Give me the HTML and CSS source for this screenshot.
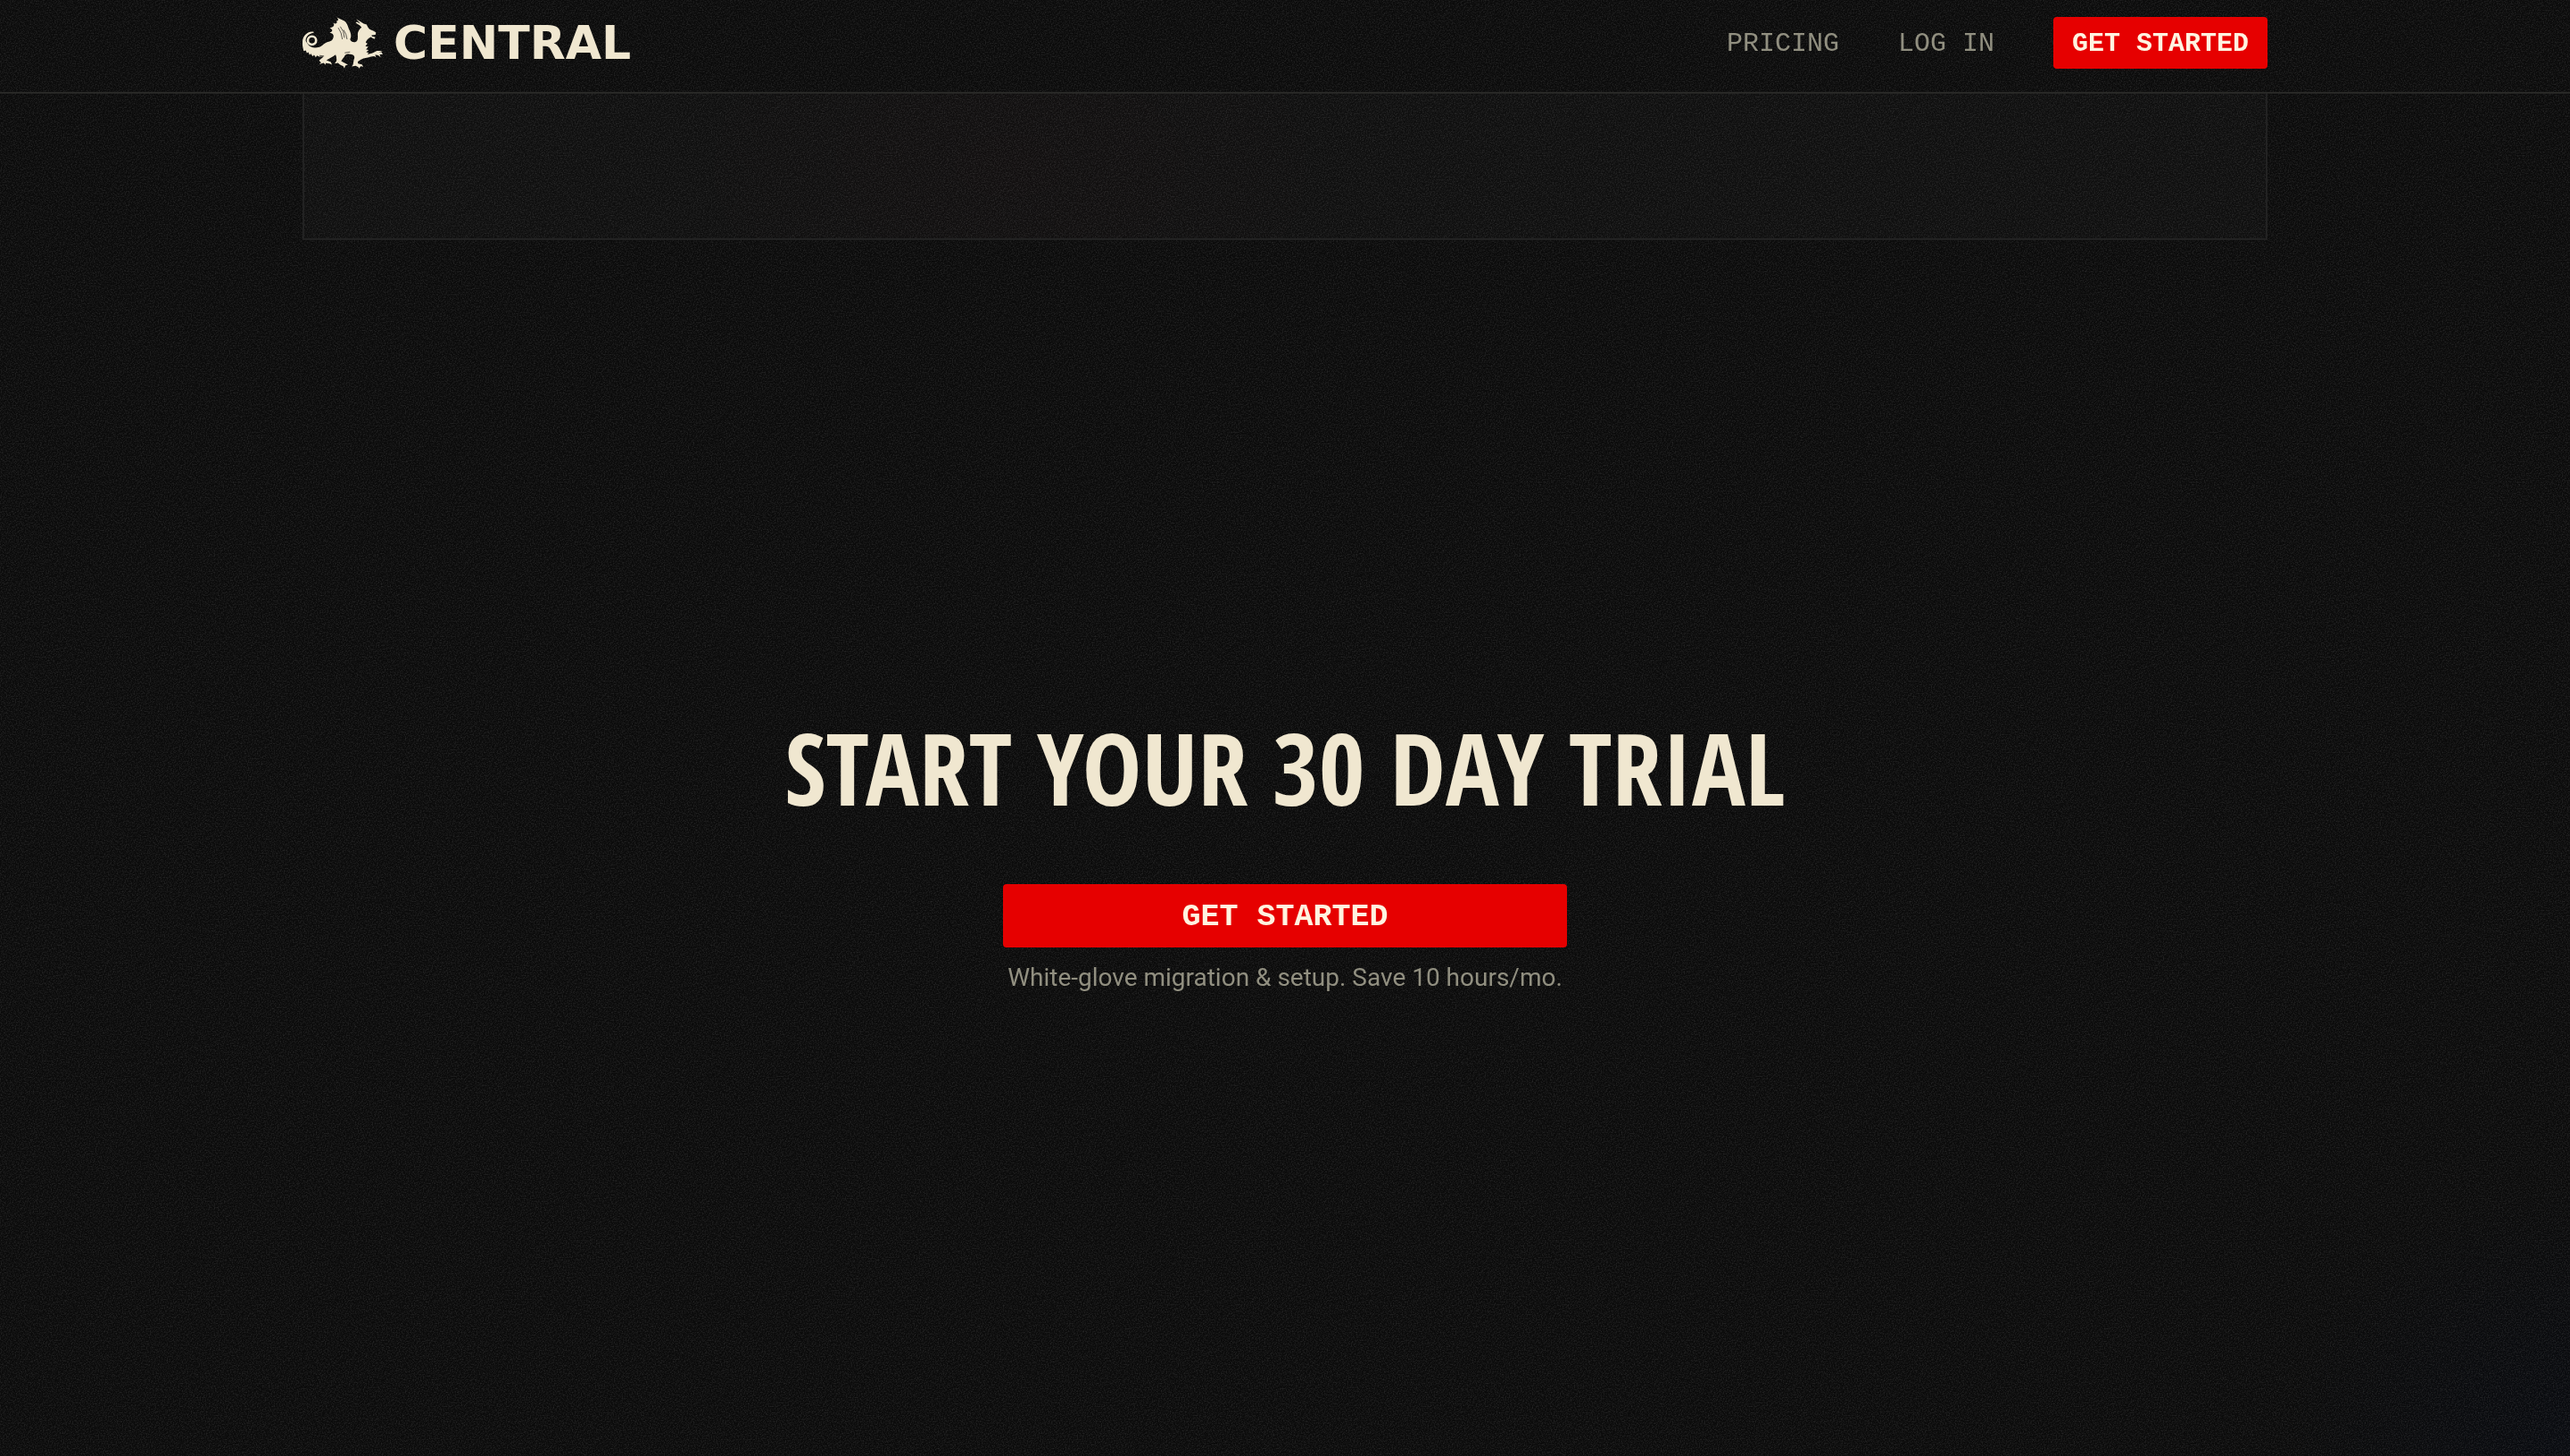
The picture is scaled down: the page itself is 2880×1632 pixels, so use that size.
FILE: index.html
```html
<!DOCTYPE html>
<html lang="en">
<head>
<meta charset="utf-8">
<meta name="viewport" content="width=device-width, initial-scale=1">
<title>Central</title>
<link rel="stylesheet" href="styles.css">
</head>
<body>
<svg class="grain" aria-hidden="true">
  <filter id="grain" x="0" y="0" width="100%" height="100%" color-interpolation-filters="sRGB">
    <feTurbulence type="fractalNoise" baseFrequency="0.7" numOctaves="2" stitchTiles="stitch"/>
    <feColorMatrix values="0 0 0 0 1  0 0 0 0 1  0 0 0 0 1  0.24 0 0 0 -0.095"/>
  </filter>
  <rect width="100%" height="100%" filter="url(#grain)"/>
</svg>
<header class="site-header">
  <div class="container header-row">
    <a class="brand" href="#">
      <svg class="brand-mark" viewBox="27 31 272 174" aria-hidden="true">
        <path fill="currentColor" d="M65 81C48 77 29 91 27 112C25 128 30 138 31 146L38 144L42 153L47 150L51 159L56 155L61 164L66 159L72 167L76 161L83 165L98 164C95 169 88 173 83 178L90 185L83 191L98 186L106 193L105 187L118 188L127 192L123 183L108 177C118 171 130 165 139 158C142 164 143 172 142 179L136 188L147 186L154 192L165 197L169 205L172 195L181 192L169 186L158 180C161 173 168 167 171 160C178 154 186 156 193 157C203 160 205 166 201 175L198 192L194 198L207 196L216 200L219 205L224 197L233 199L228 191L215 188L214 182C222 175 231 170 240 169C252 168 261 163 270 163L276 167L273 158L283 160L292 167L288 157L299 157L294 149L285 150L299 145L279 145L264 153L247 157L251 151L243 150L251 142L242 141L250 131L240 130L247 120L241 117C243 110 249 102 258 98L270 105L274 99L262 96L261 92L274 91L276 83L268 78L254 72L249 66L244 56L234 53L209 37L223 53L211 47L207 50L222 60L227 66C219 72 213 82 214 92C215 104 214 111 207 115C199 118 191 114 188 106C194 98 191 84 184 71C179 55 174 45 164 42L143 32C151 40 148 46 141 43C148 51 140 56 131 51C137 59 133 65 119 67C131 73 130 80 119 84C131 85 134 93 131 101C128 111 121 112 113 115C100 118 95 129 84 132C68 137 54 134 46 124L38 112C37 97 50 86 65 84Z"/>
        <circle class="brand-tail" cx="59" cy="110" r="14"/>
        <path class="brand-cut" d="M148 67Q160 83 162 106M155 63Q168 78 169 101M166 74Q176 88 178 106M100 163L84 161M170 152L188 149"/>
      </svg>
      <span class="brand-name">CENTRAL</span>
    </a>
    <nav class="nav">
      <a class="nav-link" href="#">PRICING</a>
      <a class="nav-link" href="#">LOG IN</a>
      <button class="btn btn-small" type="button">GET STARTED</button>
    </nav>
  </div>
</header>
<main>
  <div class="container">
    <div class="panel"></div>
  </div>
  <section class="cta">
    <h1 class="cta-title">START YOUR 30 DAY TRIAL</h1>
    <div class="cta-action">
      <button class="btn btn-large" type="button">GET STARTED</button>
      <p class="cta-note">White-glove migration &amp; setup. Save 10 hours/mo.</p>
    </div>
  </section>
</main>
</body>
</html>
```
FILE: styles.css
```css
:root {
  --cream: #f0e7d0;
  --muted: #918f80;
  --red: #e60000;
  --line: #282826;
}

* { box-sizing: border-box; }

body {
  margin: 0;
  min-height: 100vh;
  color: var(--cream);
  background: radial-gradient(ellipse 320px 300px at 100% 100%, #090b10, #0b0b0b) #0b0b0b;
  font-family: Roboto, "Liberation Sans", sans-serif;
}

.grain {
  position: fixed;
  inset: 0;
  z-index: -1;
  width: 100%;
  height: 100%;
}

.container {
  width: 100%;
  max-width: 2282px;
  margin: 0 auto;
  padding: 0 40px;
}

.site-header { border-bottom: 2px solid var(--line); }

.header-row {
  display: flex;
  align-items: center;
  justify-content: space-between;
  padding-top: 19px;
  padding-bottom: 26px;
}

.brand {
  display: flex;
  align-items: center;
  gap: 12px;
  color: var(--cream);
  text-decoration: none;
}

.brand-mark { width: 90px; height: 58px; }

.brand-cut {
  fill: none;
  stroke: #111;
  stroke-width: 2;
}

.brand-tail {
  fill: none;
  stroke: currentColor;
  stroke-width: 8;
}

.brand-name {
  font: 700 52px/58px "DejaVu Sans", sans-serif;
}

.nav {
  display: flex;
  align-items: center;
  gap: 66px;
}

.nav-link {
  padding-top: 2px;
  color: var(--muted);
  font: 30px/56px "Liberation Mono", monospace;
  text-decoration: none;
}

.btn {
  border: 0;
  border-radius: 4px;
  color: #fff3e0;
  background: var(--red);
  font-family: "Liberation Mono", monospace;
  font-weight: 700;
  cursor: pointer;
}

.btn-small {
  padding: 2px 21px 0;
  font-size: 30px;
  line-height: 56px;
}

.btn-large {
  width: 100%;
  padding: 3px 0 0;
  font-size: 35px;
  line-height: 68px;
}

.panel {
  height: 164px;
  border: 2px solid #222;
  border-top: 0;
  background:
    radial-gradient(ellipse 400px 240px at 36% 50%, rgba(255, 30, 60, 0.01), transparent),
    rgba(255, 255, 255, 0.018);
}

.cta {
  display: flex;
  flex-direction: column;
  align-items: center;
  gap: 67px;
  padding: 527px 40px 480px;
}

.cta-title {
  margin: 0;
  font: 700 112px/128px "Open Sans Condensed", "Roboto Condensed", sans-serif;
}

.cta-action {
  width: 100%;
  max-width: 632px;
}

.cta-note {
  margin: 14px 0 0;
  color: var(--muted);
  font-size: 28px;
  line-height: 40px;
  text-align: center;
}
```
